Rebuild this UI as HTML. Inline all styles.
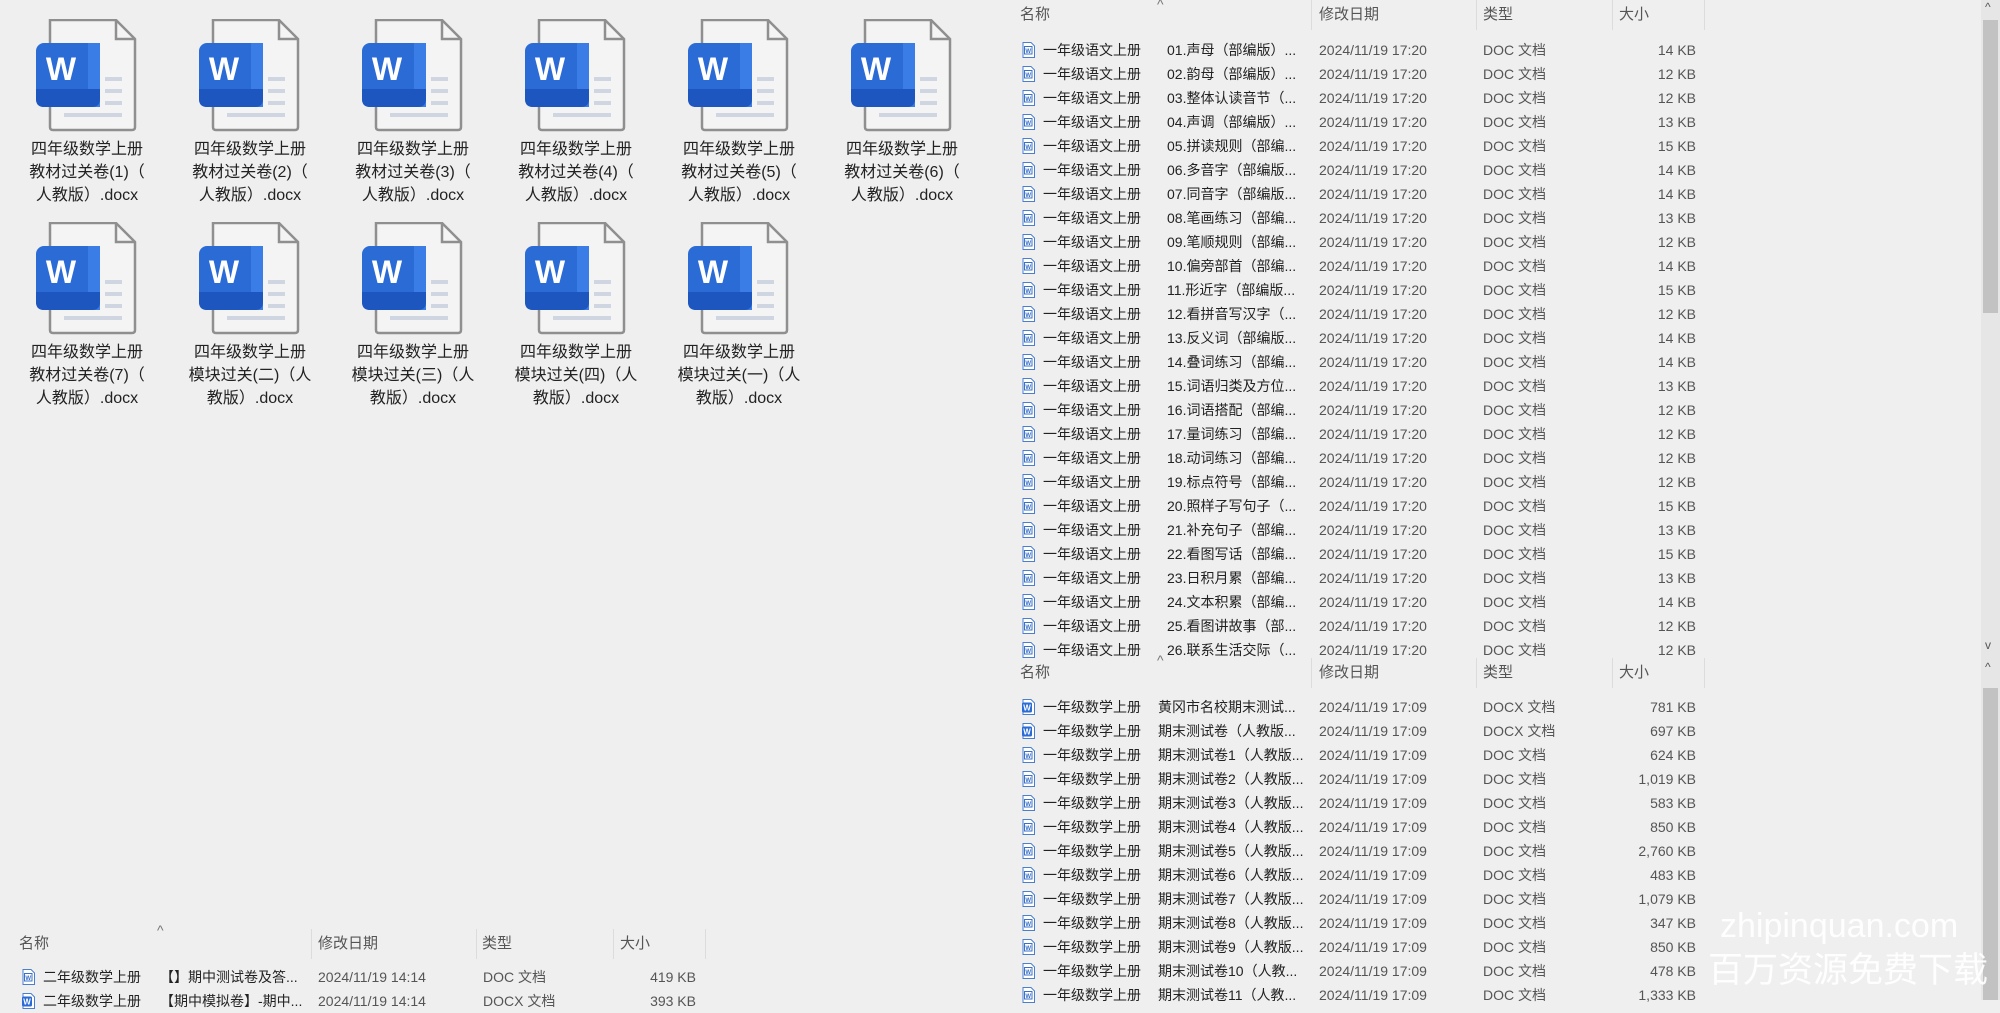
<!DOCTYPE html>
<html><head><meta charset="utf-8">
<style>
*{margin:0;padding:0;box-sizing:border-box}
body{width:2000px;height:1000px;overflow:hidden;background:#efefef;font-family:"Liberation Sans","Noto Sans CJK SC",sans-serif;position:relative;color:#222}
.ic{position:absolute;width:110px;height:115px}
.lb{position:absolute;width:150px;text-align:center;font-size:16px;line-height:23px;color:#222}
.hd{position:absolute;height:30px;width:720px;font-size:15px;color:#555}
.hd span{position:absolute;top:0;line-height:30px}
.hd i{position:absolute;top:0;width:1px;height:30px;background:#dcdcdc}
.car{position:absolute;font-size:14px;color:#777;font-style:normal}
.r{position:absolute;height:24px;width:720px;font-size:14px;color:#333;line-height:24px;white-space:nowrap}
.r span{position:absolute;top:0}
.r .n{left:43px;color:#222}
.r .t{left:167px;color:#222}
.r .d{left:319px;color:#555}
.r .y{left:483px;color:#555}
.r .s{right:24px;color:#555}
.r svg{position:absolute;left:21px;top:4px}
.sb{position:absolute;left:1981px;width:19px;background:#e6e6e6}
.wm{position:absolute;color:rgba(255,255,255,.92);font-family:"Liberation Sans","Noto Sans CJK SC",sans-serif;line-height:40px;white-space:nowrap}
</style></head><body>

<svg width="0" height="0" style="position:absolute">
<defs>
<symbol id="w" viewBox="0 0 110 115">
<path d="M16 1 H82 L101 20 V108 Q101 111 98 111 H19 Q16 111 16 108 Z" fill="#f4f4f4" stroke="#8f8f8f" stroke-width="2.5"/>
<path d="M82 1 V20 H101" fill="none" stroke="#8f8f8f" stroke-width="2.5"/>
<rect x="71" y="58" width="17" height="4" fill="#cfd6e2"/>
<rect x="71" y="70" width="17" height="4" fill="#cfd6e2"/>
<rect x="71" y="82" width="17" height="4" fill="#cfd6e2"/>
<rect x="30" y="94" width="58" height="4" fill="#cfd6e2"/>
<rect x="2" y="24" width="64" height="64" rx="8" fill="#2b6bd6"/>
<rect x="54" y="24" width="12" height="64" fill="#3b7de6"/>
<path d="M2 70 H66 V80 Q66 88 58 88 H10 Q2 88 2 80 Z" fill="#1d56bf"/>
<text x="27" y="61" font-family="Liberation Sans" font-weight="bold" font-size="32" fill="#fff" text-anchor="middle">W</text>
</symbol>
<symbol id="s" viewBox="0 0 14 16">
<path d="M2 .5 H10 L13.5 4 V15.5 H2 Z" fill="#fff" stroke="#4a7fd0" stroke-width="1"/>
<rect x="3.5" y="4.5" width="7.5" height="7.5" fill="#fff" stroke="#3a70c8" stroke-width="1"/>
<text x="7.2" y="11" font-size="6" fill="#3a70c8" text-anchor="middle" font-family="Liberation Sans" font-weight="bold">W</text>
</symbol>
<symbol id="x" viewBox="0 0 14 16">
<path d="M2 .5 H10 L13.5 4 V15.5 H2 Z" fill="#fff" stroke="#4a7fd0" stroke-width="1"/>
<rect x="1" y="3.5" width="10" height="10" rx="1.5" fill="#2b6bd6"/>
<text x="6" y="11.5" font-size="8" fill="#fff" text-anchor="middle" font-family="Liberation Sans" font-weight="bold">W</text>
</symbol>
</defs></svg>

<svg class="ic" style="left:34px;top:19px"><use href="#w"/></svg>
<svg class="ic" style="left:197px;top:19px"><use href="#w"/></svg>
<svg class="ic" style="left:360px;top:19px"><use href="#w"/></svg>
<svg class="ic" style="left:523px;top:19px"><use href="#w"/></svg>
<svg class="ic" style="left:686px;top:19px"><use href="#w"/></svg>
<svg class="ic" style="left:849px;top:19px"><use href="#w"/></svg>
<svg class="ic" style="left:34px;top:222px"><use href="#w"/></svg>
<svg class="ic" style="left:197px;top:222px"><use href="#w"/></svg>
<svg class="ic" style="left:360px;top:222px"><use href="#w"/></svg>
<svg class="ic" style="left:523px;top:222px"><use href="#w"/></svg>
<svg class="ic" style="left:686px;top:222px"><use href="#w"/></svg>

<div class="lb" style="left:12px;top:138px">四年级数学上册<br>教材过关卷(1)（<br>人教版）.docx</div>
<div class="lb" style="left:175px;top:138px">四年级数学上册<br>教材过关卷(2)（<br>人教版）.docx</div>
<div class="lb" style="left:338px;top:138px">四年级数学上册<br>教材过关卷(3)（<br>人教版）.docx</div>
<div class="lb" style="left:501px;top:138px">四年级数学上册<br>教材过关卷(4)（<br>人教版）.docx</div>
<div class="lb" style="left:664px;top:138px">四年级数学上册<br>教材过关卷(5)（<br>人教版）.docx</div>
<div class="lb" style="left:827px;top:138px">四年级数学上册<br>教材过关卷(6)（<br>人教版）.docx</div>
<div class="lb" style="left:12px;top:341px">四年级数学上册<br>教材过关卷(7)（<br>人教版）.docx</div>
<div class="lb" style="left:175px;top:341px">四年级数学上册<br>模块过关(二)（人<br>教版）.docx</div>
<div class="lb" style="left:338px;top:341px">四年级数学上册<br>模块过关(三)（人<br>教版）.docx</div>
<div class="lb" style="left:501px;top:341px">四年级数学上册<br>模块过关(四)（人<br>教版）.docx</div>
<div class="lb" style="left:664px;top:341px">四年级数学上册<br>模块过关(一)（人<br>教版）.docx</div>

<div class="hd" style="left:1000px;top:0px"><span style="left:20px">名称</span><i style="left:311px"></i><span style="left:319px">修改日期</span><i style="left:476px"></i><span style="left:483px">类型</span><i style="left:612px"></i><span style="left:619px">大小</span><i style="left:704px"></i></div>
<i class="car" style="left:1157px;top:-4px">^</i>

<div class="r" style="left:1000px;top:38px"><svg width="14" height="16"><use href="#s"/></svg><span class="n">一年级语文上册</span><span class="t">01.声母（部编版）...</span><span class="d">2024/11/19 17:20</span><span class="y">DOC 文档</span><span class="s">14 KB</span></div>
<div class="r" style="left:1000px;top:62px"><svg width="14" height="16"><use href="#s"/></svg><span class="n">一年级语文上册</span><span class="t">02.韵母（部编版）...</span><span class="d">2024/11/19 17:20</span><span class="y">DOC 文档</span><span class="s">12 KB</span></div>
<div class="r" style="left:1000px;top:86px"><svg width="14" height="16"><use href="#s"/></svg><span class="n">一年级语文上册</span><span class="t">03.整体认读音节（...</span><span class="d">2024/11/19 17:20</span><span class="y">DOC 文档</span><span class="s">12 KB</span></div>
<div class="r" style="left:1000px;top:110px"><svg width="14" height="16"><use href="#s"/></svg><span class="n">一年级语文上册</span><span class="t">04.声调（部编版）...</span><span class="d">2024/11/19 17:20</span><span class="y">DOC 文档</span><span class="s">13 KB</span></div>
<div class="r" style="left:1000px;top:134px"><svg width="14" height="16"><use href="#s"/></svg><span class="n">一年级语文上册</span><span class="t">05.拼读规则（部编...</span><span class="d">2024/11/19 17:20</span><span class="y">DOC 文档</span><span class="s">15 KB</span></div>
<div class="r" style="left:1000px;top:158px"><svg width="14" height="16"><use href="#s"/></svg><span class="n">一年级语文上册</span><span class="t">06.多音字（部编版...</span><span class="d">2024/11/19 17:20</span><span class="y">DOC 文档</span><span class="s">14 KB</span></div>
<div class="r" style="left:1000px;top:182px"><svg width="14" height="16"><use href="#s"/></svg><span class="n">一年级语文上册</span><span class="t">07.同音字（部编版...</span><span class="d">2024/11/19 17:20</span><span class="y">DOC 文档</span><span class="s">14 KB</span></div>
<div class="r" style="left:1000px;top:206px"><svg width="14" height="16"><use href="#s"/></svg><span class="n">一年级语文上册</span><span class="t">08.笔画练习（部编...</span><span class="d">2024/11/19 17:20</span><span class="y">DOC 文档</span><span class="s">13 KB</span></div>
<div class="r" style="left:1000px;top:230px"><svg width="14" height="16"><use href="#s"/></svg><span class="n">一年级语文上册</span><span class="t">09.笔顺规则（部编...</span><span class="d">2024/11/19 17:20</span><span class="y">DOC 文档</span><span class="s">12 KB</span></div>
<div class="r" style="left:1000px;top:254px"><svg width="14" height="16"><use href="#s"/></svg><span class="n">一年级语文上册</span><span class="t">10.偏旁部首（部编...</span><span class="d">2024/11/19 17:20</span><span class="y">DOC 文档</span><span class="s">14 KB</span></div>
<div class="r" style="left:1000px;top:278px"><svg width="14" height="16"><use href="#s"/></svg><span class="n">一年级语文上册</span><span class="t">11.形近字（部编版...</span><span class="d">2024/11/19 17:20</span><span class="y">DOC 文档</span><span class="s">15 KB</span></div>
<div class="r" style="left:1000px;top:302px"><svg width="14" height="16"><use href="#s"/></svg><span class="n">一年级语文上册</span><span class="t">12.看拼音写汉字（...</span><span class="d">2024/11/19 17:20</span><span class="y">DOC 文档</span><span class="s">12 KB</span></div>
<div class="r" style="left:1000px;top:326px"><svg width="14" height="16"><use href="#s"/></svg><span class="n">一年级语文上册</span><span class="t">13.反义词（部编版...</span><span class="d">2024/11/19 17:20</span><span class="y">DOC 文档</span><span class="s">14 KB</span></div>
<div class="r" style="left:1000px;top:350px"><svg width="14" height="16"><use href="#s"/></svg><span class="n">一年级语文上册</span><span class="t">14.叠词练习（部编...</span><span class="d">2024/11/19 17:20</span><span class="y">DOC 文档</span><span class="s">14 KB</span></div>
<div class="r" style="left:1000px;top:374px"><svg width="14" height="16"><use href="#s"/></svg><span class="n">一年级语文上册</span><span class="t">15.词语归类及方位...</span><span class="d">2024/11/19 17:20</span><span class="y">DOC 文档</span><span class="s">13 KB</span></div>
<div class="r" style="left:1000px;top:398px"><svg width="14" height="16"><use href="#s"/></svg><span class="n">一年级语文上册</span><span class="t">16.词语搭配（部编...</span><span class="d">2024/11/19 17:20</span><span class="y">DOC 文档</span><span class="s">12 KB</span></div>
<div class="r" style="left:1000px;top:422px"><svg width="14" height="16"><use href="#s"/></svg><span class="n">一年级语文上册</span><span class="t">17.量词练习（部编...</span><span class="d">2024/11/19 17:20</span><span class="y">DOC 文档</span><span class="s">12 KB</span></div>
<div class="r" style="left:1000px;top:446px"><svg width="14" height="16"><use href="#s"/></svg><span class="n">一年级语文上册</span><span class="t">18.动词练习（部编...</span><span class="d">2024/11/19 17:20</span><span class="y">DOC 文档</span><span class="s">12 KB</span></div>
<div class="r" style="left:1000px;top:470px"><svg width="14" height="16"><use href="#s"/></svg><span class="n">一年级语文上册</span><span class="t">19.标点符号（部编...</span><span class="d">2024/11/19 17:20</span><span class="y">DOC 文档</span><span class="s">12 KB</span></div>
<div class="r" style="left:1000px;top:494px"><svg width="14" height="16"><use href="#s"/></svg><span class="n">一年级语文上册</span><span class="t">20.照样子写句子（...</span><span class="d">2024/11/19 17:20</span><span class="y">DOC 文档</span><span class="s">15 KB</span></div>
<div class="r" style="left:1000px;top:518px"><svg width="14" height="16"><use href="#s"/></svg><span class="n">一年级语文上册</span><span class="t">21.补充句子（部编...</span><span class="d">2024/11/19 17:20</span><span class="y">DOC 文档</span><span class="s">13 KB</span></div>
<div class="r" style="left:1000px;top:542px"><svg width="14" height="16"><use href="#s"/></svg><span class="n">一年级语文上册</span><span class="t">22.看图写话（部编...</span><span class="d">2024/11/19 17:20</span><span class="y">DOC 文档</span><span class="s">15 KB</span></div>
<div class="r" style="left:1000px;top:566px"><svg width="14" height="16"><use href="#s"/></svg><span class="n">一年级语文上册</span><span class="t">23.日积月累（部编...</span><span class="d">2024/11/19 17:20</span><span class="y">DOC 文档</span><span class="s">13 KB</span></div>
<div class="r" style="left:1000px;top:590px"><svg width="14" height="16"><use href="#s"/></svg><span class="n">一年级语文上册</span><span class="t">24.文本积累（部编...</span><span class="d">2024/11/19 17:20</span><span class="y">DOC 文档</span><span class="s">14 KB</span></div>
<div class="r" style="left:1000px;top:614px"><svg width="14" height="16"><use href="#s"/></svg><span class="n">一年级语文上册</span><span class="t">25.看图讲故事（部...</span><span class="d">2024/11/19 17:20</span><span class="y">DOC 文档</span><span class="s">12 KB</span></div>
<div class="r" style="left:1000px;top:638px"><svg width="14" height="16"><use href="#s"/></svg><span class="n">一年级语文上册</span><span class="t">26.联系生活交际（...</span><span class="d">2024/11/19 17:20</span><span class="y">DOC 文档</span><span class="s">12 KB</span></div>

<div class="hd" style="left:1000px;top:658px;background:#efefef"><span style="left:20px">名称</span><i style="left:311px"></i><span style="left:319px">修改日期</span><i style="left:476px"></i><span style="left:483px">类型</span><i style="left:612px"></i><span style="left:619px">大小</span><i style="left:704px"></i></div>
<i class="car" style="left:1157px;top:652px">^</i>

<div class="r" style="left:1000px;top:695px"><svg width="14" height="16"><use href="#x"/></svg><span class="n">一年级数学上册</span><span class="t" style="left:158px">黄冈市名校期末测试...</span><span class="d">2024/11/19 17:09</span><span class="y">DOCX 文档</span><span class="s">781 KB</span></div>
<div class="r" style="left:1000px;top:719px"><svg width="14" height="16"><use href="#x"/></svg><span class="n">一年级数学上册</span><span class="t" style="left:158px">期末测试卷（人教版...</span><span class="d">2024/11/19 17:09</span><span class="y">DOCX 文档</span><span class="s">697 KB</span></div>
<div class="r" style="left:1000px;top:743px"><svg width="14" height="16"><use href="#s"/></svg><span class="n">一年级数学上册</span><span class="t" style="left:158px">期末测试卷1（人教版...</span><span class="d">2024/11/19 17:09</span><span class="y">DOC 文档</span><span class="s">624 KB</span></div>
<div class="r" style="left:1000px;top:767px"><svg width="14" height="16"><use href="#s"/></svg><span class="n">一年级数学上册</span><span class="t" style="left:158px">期末测试卷2（人教版...</span><span class="d">2024/11/19 17:09</span><span class="y">DOC 文档</span><span class="s">1,019 KB</span></div>
<div class="r" style="left:1000px;top:791px"><svg width="14" height="16"><use href="#s"/></svg><span class="n">一年级数学上册</span><span class="t" style="left:158px">期末测试卷3（人教版...</span><span class="d">2024/11/19 17:09</span><span class="y">DOC 文档</span><span class="s">583 KB</span></div>
<div class="r" style="left:1000px;top:815px"><svg width="14" height="16"><use href="#s"/></svg><span class="n">一年级数学上册</span><span class="t" style="left:158px">期末测试卷4（人教版...</span><span class="d">2024/11/19 17:09</span><span class="y">DOC 文档</span><span class="s">850 KB</span></div>
<div class="r" style="left:1000px;top:839px"><svg width="14" height="16"><use href="#s"/></svg><span class="n">一年级数学上册</span><span class="t" style="left:158px">期末测试卷5（人教版...</span><span class="d">2024/11/19 17:09</span><span class="y">DOC 文档</span><span class="s">2,760 KB</span></div>
<div class="r" style="left:1000px;top:863px"><svg width="14" height="16"><use href="#s"/></svg><span class="n">一年级数学上册</span><span class="t" style="left:158px">期末测试卷6（人教版...</span><span class="d">2024/11/19 17:09</span><span class="y">DOC 文档</span><span class="s">483 KB</span></div>
<div class="r" style="left:1000px;top:887px"><svg width="14" height="16"><use href="#s"/></svg><span class="n">一年级数学上册</span><span class="t" style="left:158px">期末测试卷7（人教版...</span><span class="d">2024/11/19 17:09</span><span class="y">DOC 文档</span><span class="s">1,079 KB</span></div>
<div class="r" style="left:1000px;top:911px"><svg width="14" height="16"><use href="#s"/></svg><span class="n">一年级数学上册</span><span class="t" style="left:158px">期末测试卷8（人教版...</span><span class="d">2024/11/19 17:09</span><span class="y">DOC 文档</span><span class="s">347 KB</span></div>
<div class="r" style="left:1000px;top:935px"><svg width="14" height="16"><use href="#s"/></svg><span class="n">一年级数学上册</span><span class="t" style="left:158px">期末测试卷9（人教版...</span><span class="d">2024/11/19 17:09</span><span class="y">DOC 文档</span><span class="s">850 KB</span></div>
<div class="r" style="left:1000px;top:959px"><svg width="14" height="16"><use href="#s"/></svg><span class="n">一年级数学上册</span><span class="t" style="left:158px">期末测试卷10（人教...</span><span class="d">2024/11/19 17:09</span><span class="y">DOC 文档</span><span class="s">478 KB</span></div>
<div class="r" style="left:1000px;top:983px"><svg width="14" height="16"><use href="#s"/></svg><span class="n">一年级数学上册</span><span class="t" style="left:158px">期末测试卷11（人教...</span><span class="d">2024/11/19 17:09</span><span class="y">DOC 文档</span><span class="s">1,333 KB</span></div>

<div class="hd" style="left:0px;top:929px"><span style="left:19px">名称</span><i style="left:311px"></i><span style="left:318px">修改日期</span><i style="left:476px"></i><span style="left:482px">类型</span><i style="left:613px"></i><span style="left:620px">大小</span><i style="left:705px"></i></div>
<i class="car" style="left:157px;top:922px">^</i>
<div class="r" style="left:0px;top:965px"><svg width="14" height="16"><use href="#s"/></svg><span class="n">二年级数学上册</span><span class="t" style="left:160px">【】期中测试卷及答...</span><span class="d" style="left:318px">2024/11/19 14:14</span><span class="y">DOC 文档</span><span class="s">419 KB</span></div>
<div class="r" style="left:0px;top:989px"><svg width="14" height="16"><use href="#x"/></svg><span class="n">二年级数学上册</span><span class="t" style="left:160px">【期中模拟卷】-期中...</span><span class="d" style="left:318px">2024/11/19 14:14</span><span class="y">DOCX 文档</span><span class="s">393 KB</span></div>

<div class="sb" style="top:0;height:660px"></div>
<div style="position:absolute;left:1983px;top:20px;width:15px;height:293px;background:#c2c2c2"></div>
<div style="position:absolute;left:1985px;top:0;font-size:12px;color:#555">^</div>
<div style="position:absolute;left:1985px;top:638px;font-size:12px;color:#555">v</div>
<div class="sb" style="top:660px;height:340px"></div>
<div style="position:absolute;left:1985px;top:660px;font-size:12px;color:#555">^</div>
<div style="position:absolute;left:1983px;top:688px;width:15px;height:312px;background:#c2c2c2"></div>

<div class="wm" style="left:1720px;top:906px;font-size:34px">zhipinquan.com</div>
<div class="wm" style="left:1708px;top:951px;font-size:35px">百万资源免费下载</div>
</body></html>
